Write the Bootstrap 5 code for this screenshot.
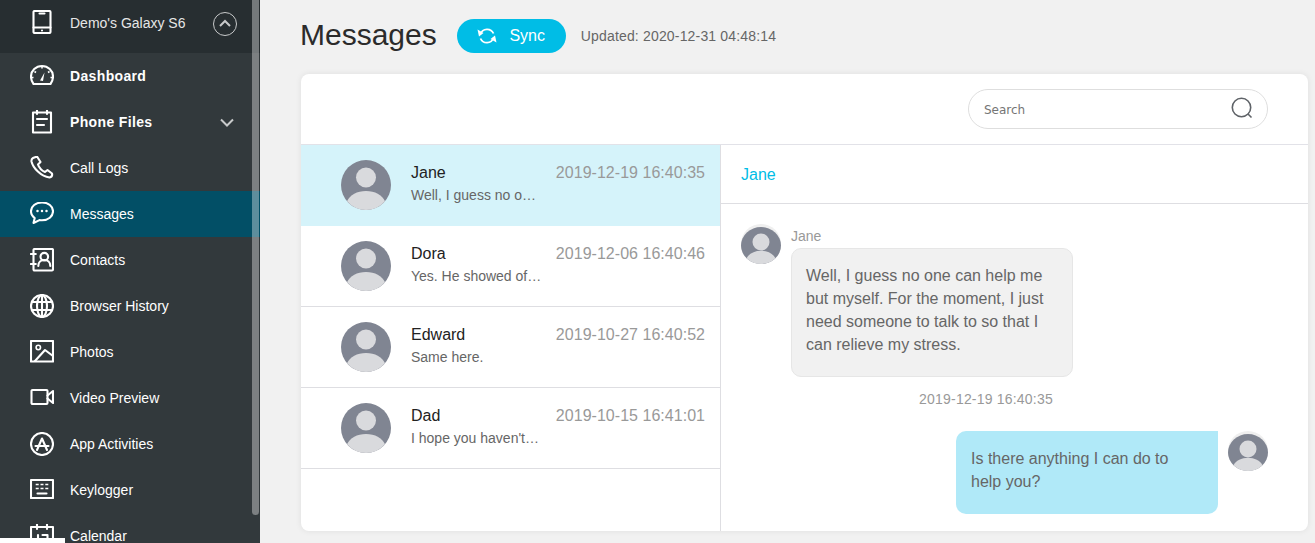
<!DOCTYPE html>
<html lang="en">
<head>
<meta charset="utf-8">
<title>Messages</title>
<link href="https://cdn.jsdelivr.net/npm/bootstrap@5.3.0/dist/css/bootstrap.min.css" rel="stylesheet">
<style>
html,body{height:543px;overflow:hidden}
body{font-family:"Liberation Sans",Arial,sans-serif;background:#f1f1f1;color:#666}
.shell{height:543px;overflow:hidden}
.side{width:260px;height:543px;flex:none;background:#32393c;color:#fff;overflow:hidden;position:relative}
.side-top{height:53px;background:#272e31;padding:0 23px 6px 30px;font-size:14px;color:#e6e6e6}
.side-ico{width:24px;height:24px;flex:none;margin-right:16px;fill:none;stroke:#fff;stroke-width:2.1;stroke-linecap:round;stroke-linejoin:round}
.top-ico{margin-bottom:3px}
.top-toggle{margin-top:1px}
.side-row{height:46px;padding-left:30px;padding-right:26px;font-size:14px;color:#fff;text-decoration:none}
.side-row.strong{font-weight:700;letter-spacing:.35px}
.side-row.on{background:#024f66}
.solid{fill:#fff;stroke:none}
.thin{stroke-width:1.6;stroke-linecap:butt}
.thumb{position:absolute;left:252px;top:0;width:7px;height:515px;background:rgba(255,255,255,.36);border-radius:0 0 4px 4px}
.corner{position:absolute;left:0;bottom:0;width:65px;height:5px;background:#fff}
.main{padding:0 7px 12px 41px;min-width:0}
.head{height:74px;padding-top:4px;padding-bottom:21px;margin-left:-1px}
.title{font-size:30px;line-height:34px;color:#2b2b2b;margin:0 20px 1px 0;font-weight:400}
.sync{width:109px;height:34px;border-radius:17px;background:#00bde6;color:#fff;font-size:16px;border:0;padding:0}
.sync svg{width:20px;height:20px;margin-right:12px;fill:none;stroke:#fff;stroke-width:1.8}
.sync svg polygon{fill:#fff;stroke:none}
.stamp{font-size:14px;line-height:34px;color:#666;margin-left:15px;letter-spacing:.17px}
.panel{height:457px;background:#fff;border-radius:8px;box-shadow:0 0 6px rgba(0,0,0,.08);overflow:hidden}
.bar{height:71px;border-bottom:1px solid #e2e2e8;padding-right:40px}
.find{width:300px;height:40px;border:1px solid #dedede;border-radius:20px;padding:0 14px 0 15px}
.find span{font-family:"DejaVu Sans",sans-serif;font-size:12px;color:#757575;margin-top:2px}
.find svg{width:22px;height:22px;fill:none;stroke:#5f6368;stroke-width:1.6;margin-bottom:3px}
.lists{width:420px;flex:none;border-right:1px solid #dedee2;height:386px}
.who{height:81px;padding-left:40px;padding-right:15px;border-bottom:1px solid #dedee2}
.who.on{background:#d5f3fa;border-bottom-color:#d5f3fa}
.face{width:50px;height:50px;flex:none;margin-right:20px}
.who-mid{width:130px;flex:none;margin-top:-2px}
.who-name{font-size:16px;line-height:20px;color:#222;margin-bottom:2px}
.who-text{font-size:14px;line-height:20px;color:#666;white-space:nowrap}
.who-time{font-size:16px;line-height:20px;color:#999;margin-left:auto;align-self:flex-start;margin-top:18px;white-space:nowrap;letter-spacing:.03px}
.talk{min-width:0;height:386px}
.talk-head{height:59px;border-bottom:1px solid #dedee2;padding:2px 0 0 20px;font-size:16px;color:#00bde6}
.talk-body{padding:20px 40px 0 20px}
.mini{width:40px;height:42px;flex:none}
.mine-label{font-size:14px;line-height:16px;color:#999;margin:4px 0 4px 10px}
.cloud{font-size:16px;line-height:23px;color:#666}
.cloud.in{width:282px;background:#f1f1f1;border:1px solid #e6e6e6;border-radius:10px;margin-left:10px;padding:15px 14px 20px}
.cloud.out{width:262px;background:#b0e9f8;border-radius:10px 0 10px 10px;padding:16px 15px 21px;margin-right:10px}
.when{font-size:14px;line-height:16px;letter-spacing:.2px;color:#999;text-align:center;margin:14px 0 24px;width:490px}
</style>
</head>
<body>
<div class="shell d-flex">
  <nav class="side">
    <div class="side-top d-flex align-items-center">
      <svg class="side-ico top-ico" viewBox="0 0 24 24"><rect x="3.500" y="1" width="17" height="22" rx="1"/><path d="M9.500 3.500h5M3.500 17.500h17M12 20.500h.01"/></svg>
      <span>Demo's Galaxy S6</span>
      <svg class="ms-auto top-toggle" width="24" height="24" viewBox="0 0 24 24" fill="none" stroke="#c8cacb"><circle cx="12" cy="12" r="11.500"/><path d="M7 14l5-5 5 5" stroke-width="2"/></svg>
    </div>
    <a class="side-row strong d-flex align-items-center" href="#"><svg class="side-ico" viewBox="0 0 24 24"><path d="M3.500 20H20.500C22.300 17.800 23 15 23 12.500A11 10.500 0 0 0 1 12.500C1 15 1.700 17.800 3.500 20Z"/><path d="M12 2.500v2M4.500 7.500l1.500 1M19.500 7.500l-1.500 1M1.500 13.500h2M22.500 13.500h-2" class="thin"/><polygon class="solid" points="10,16.500 14.500,8.500 13,17"/></svg>Dashboard</a>
    <a class="side-row strong d-flex align-items-center" href="#"><svg class="side-ico" viewBox="0 0 24 24"><rect x="3" y="2.500" width="18" height="20"/><path d="M7 0v4M17 0v4M7 9h10M7 15h7"/></svg>Phone Files<svg class="ms-auto" width="14" height="9" viewBox="0 0 14 9" fill="none" stroke="#c8cacb" stroke-width="2"><path d="M1 1.500l6 6 6-6"/></svg></a>
    <a class="side-row d-flex align-items-center" href="#"><svg class="side-ico" viewBox="0 0 24 24"><path d="M3 2l4-1.500 3.500 5.500-2.500 2.500c1 3 3.500 6 7 7.500l2.500-2 4.500 3.500c.5 2-.5 3.500-2.500 4C11 20.500 3 12 1.500 5.500c-.2-1.500.5-3 1.500-3.500z"/></svg>Call Logs</a>
    <a class="side-row on d-flex align-items-center" href="#"><svg class="side-ico" viewBox="0 0 24 24"><path d="M12 .5C5.700.5 1 4.300 1 9.300c0 2.700 1.300 5 3.700 6.700L3.500 21l6-2.900c.8.1 1.700.2 2.500.2 6.300 0 11-3.900 11-9S18.300.5 12 .5z"/><path d="M7.500 9h.01M12 9h.01M16.500 9h.01" stroke-width="2.500"/></svg>Messages</a>
    <a class="side-row d-flex align-items-center" href="#"><svg class="side-ico" viewBox="0 0 24 24"><rect x="3.500" y="1" width="19.500" height="21.500" rx="1"/><path d="M.8 6h5M.8 16h5"/><circle cx="14.300" cy="8.700" r="3.800"/><path d="M8.300 18c0-3.800 2.700-6 6-6s6 2.200 6 6"/></svg>Contacts</a>
    <a class="side-row d-flex align-items-center" href="#"><svg class="side-ico" viewBox="0 0 24 24"><circle cx="12" cy="12" r="11"/><ellipse cx="12" cy="12" rx="5" ry="11"/><path d="M2 8h20M2 16h20M12 1v22"/></svg>Browser History</a>
    <a class="side-row d-flex align-items-center" href="#"><svg class="side-ico" viewBox="0 0 24 24"><rect x="1" y="1" width="22" height="20.500"/><circle cx="8.300" cy="7.500" r="2.200" class="thin"/><path d="M5 21l10-11 8 6"/></svg>Photos</a>
    <a class="side-row d-flex align-items-center" href="#"><svg class="side-ico" viewBox="0 0 24 24"><rect x="1.500" y="4" width="16" height="14" rx="1"/><path d="M17.500 9.500L23 5v12l-5.500-4.500"/></svg>Video Preview</a>
    <a class="side-row d-flex align-items-center" href="#"><svg class="side-ico" viewBox="0 0 24 24"><circle cx="12" cy="12" r="11"/><path d="M7 18L12 6.500 17 18M5.500 14h13"/></svg>App Activities</a>
    <a class="side-row d-flex align-items-center" href="#"><svg class="side-ico" viewBox="0 0 24 24"><rect x="1" y="2" width="22" height="18"/><path class="thin" d="M5.700 6.500h3M10.500 6.500h3M15.300 6.500h3M5.700 10.500h3M10.500 10.500h3M15.300 10.500h3"/><path d="M7.500 15.500h9"/></svg>Keylogger</a>
    <a class="side-row d-flex align-items-center" href="#"><svg class="side-ico" viewBox="0 0 24 24"><rect x="1" y="3" width="22" height="20"/><path d="M7 0v5M17 0v5M8 11v8M12.500 11h5v4h-5v4h5"/></svg>Calendar</a>
    <div class="thumb"></div>
    <div class="corner"></div>
  </nav>
  <main class="main flex-grow-1">
    <div class="head d-flex align-items-end">
      <h1 class="title">Messages</h1>
      <button class="sync d-flex align-items-center justify-content-center" type="button"><svg viewBox="0 0 20 20"><path d="M3.500 8A7 7 0 0 1 16.500 7.500M16.500 12A7 7 0 0 1 3.500 12.500"/><polygon points="0.500,3.500 6.500,7 2,10.500"/><polygon points="19.500,16.500 13.500,13 18,9.500"/></svg>Sync</button>
      <span class="stamp">Updated: 2020-12-31 04:48:14</span>
    </div>
    <div class="panel">
      <div class="bar d-flex align-items-center justify-content-end">
        <div class="find d-flex align-items-center justify-content-between">
          <span>Search</span>
          <svg viewBox="0 0 22 22"><circle cx="10.500" cy="10.500" r="9.200"/><path d="M17 17l3.500 3.500"/></svg>
        </div>
      </div>
      <div class="d-flex">
        <div class="lists">
          <div class="who on d-flex align-items-center"><svg class="face" viewBox="0 0 50 50"><use href="#user"/></svg><div class="who-mid"><div class="who-name">Jane</div><div class="who-text">Well, I guess no o…</div></div><div class="who-time">2019-12-19 16:40:35</div></div>
          <div class="who d-flex align-items-center"><svg class="face" viewBox="0 0 50 50"><use href="#user"/></svg><div class="who-mid"><div class="who-name">Dora</div><div class="who-text">Yes. He showed of…</div></div><div class="who-time">2019-12-06 16:40:46</div></div>
          <div class="who d-flex align-items-center"><svg class="face" viewBox="0 0 50 50"><use href="#user"/></svg><div class="who-mid"><div class="who-name">Edward</div><div class="who-text">Same here.</div></div><div class="who-time">2019-10-27 16:40:52</div></div>
          <div class="who d-flex align-items-center"><svg class="face" viewBox="0 0 50 50"><use href="#user"/></svg><div class="who-mid"><div class="who-name">Dad</div><div class="who-text">I hope you haven't…</div></div><div class="who-time">2019-10-15 16:41:01</div></div>
        </div>
        <div class="talk flex-grow-1">
          <div class="talk-head d-flex align-items-center">Jane</div>
          <div class="talk-body">
            <div class="d-flex">
              <svg class="mini" viewBox="0 0 40 42"><use href="#user-small"/></svg>
              <div>
                <div class="mine-label">Jane</div>
                <div class="cloud in">Well, I guess no one can help me but myself. For the moment, I just need someone to talk to so that I can relieve my stress.</div>
              </div>
            </div>
            <div class="when">2019-12-19 16:40:35</div>
            <div class="d-flex justify-content-end">
              <div class="cloud out">Is there anything I can do to help you?</div>
              <svg class="mini" viewBox="0 0 40 42"><use href="#user-small"/></svg>
            </div>
          </div>
        </div>
      </div>
    </div>
  </main>
</div>
<svg width="0" height="0" class="position-absolute">
  <defs>
    <g id="user"><circle cx="25" cy="25" r="25" fill="#808592"/><circle cx="25" cy="17.500" r="10" fill="#d9dadd"/><path d="M6 41.200C9 35 16 31 25 31S41 35 44 41.200A25 25 0 0 1 6 41.200Z" fill="#d9dadd"/></g>
    <g id="user-small"><ellipse cx="20" cy="20" rx="20" ry="20" fill="#efefef"/><ellipse cx="20" cy="21.500" rx="20" ry="18.500" fill="#808592"/><circle cx="20" cy="18" r="8.500" fill="#d9dadd"/><path d="M5.500 34.200C8 29.500 13.500 26.700 20 26.700S32 29.500 34.500 34.200A20 18.500 0 0 1 5.500 34.200Z" fill="#d9dadd"/></g>
  </defs>
</svg>
</body>
</html>
